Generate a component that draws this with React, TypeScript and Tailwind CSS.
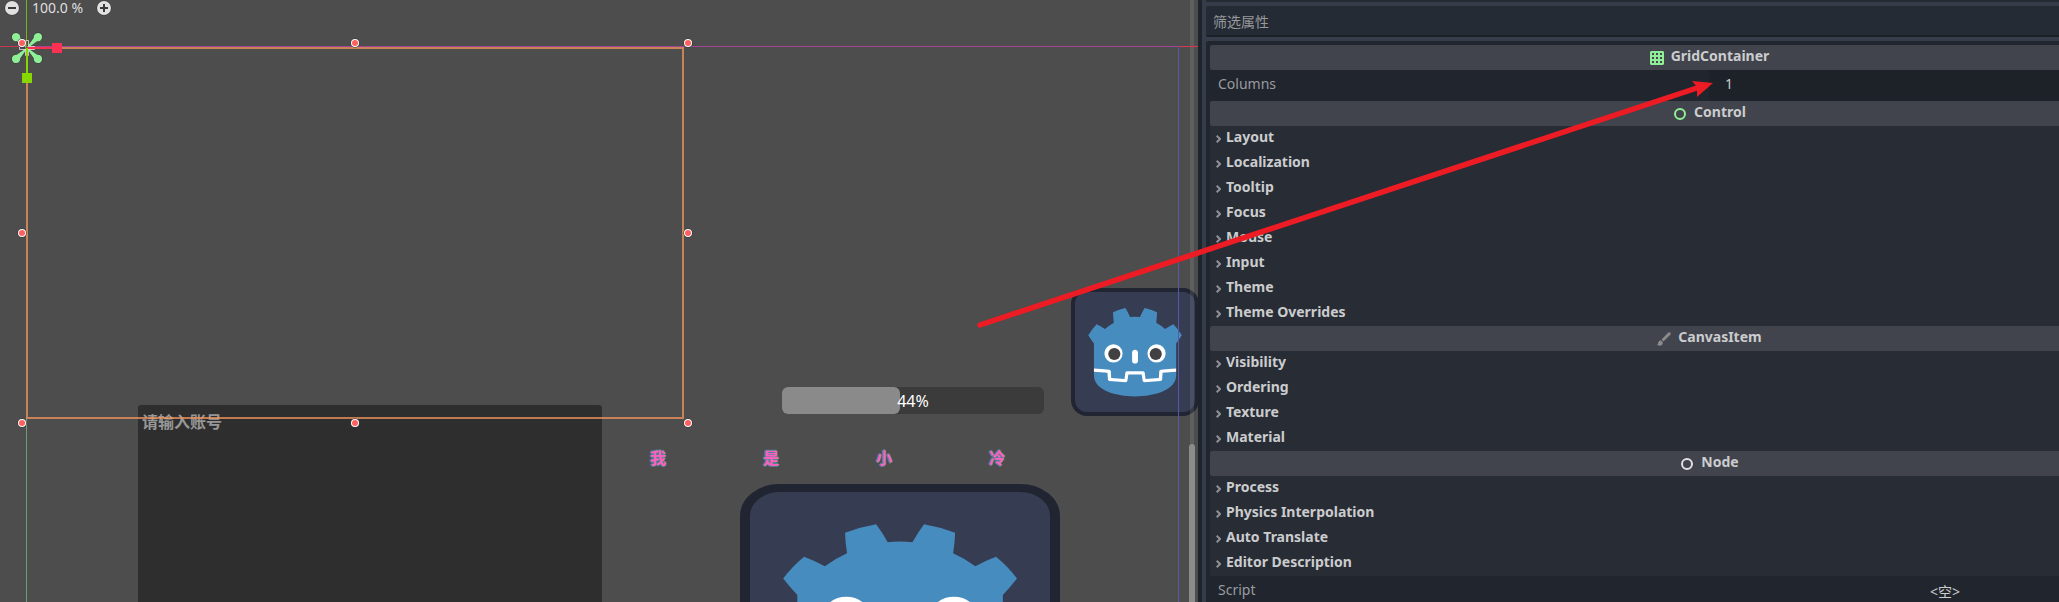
import React from "react";

const GODOT_BLUE = "#478cbf";

function GodotLogo({ className }: { className: string }) {
  return (
    <svg viewBox="0 0 128 128" preserveAspectRatio="none" className={className} aria-hidden="true">
      <rect x="2" y="2" width="124" height="124" rx="14" fill="#363d52" stroke="#212532" strokeWidth="4" />
      <g transform="scale(.101) translate(122 122)">
        <g fill="#fff">
          <path d="M105 673v33q407 354 814 0v-33z" />
          <path
            fill={GODOT_BLUE}
            d="m105 673 152 14q12 1 15 14l4 67 132 10 8-61q2-11 15-15h162q13 4 15 15l8 61 132-10 4-67q3-13 15-14l152-14V427q30-39 56-81-35-59-83-108-43 20-82 47-40-37-88-64 7-51 8-102-59-28-123-42-26 43-46 89-49-7-98 0-20-46-46-89-64 14-123 42 1 51 8 102-48 27-88 64-39-27-82-47-48 49-83 108 26 42 56 81zm0 33v39c0 276 813 276 814 0v-39l-134 12-5 69q-2 10-14 13l-162 11q-12 0-16-11l-10-65H446l-10 65q-4 11-16 11l-162-11q-12-3-14-13l-5-69z"
          />
          <path d="M483 600c0 34 58 34 58 0v-86c0-34-58-34-58 0z" />
          <circle cx="725" cy="526" r="90" />
          <circle cx="299" cy="526" r="90" />
        </g>
        <g fill="#414042">
          <circle cx="307" cy="532" r="60" />
          <circle cx="717" cy="532" r="60" />
        </g>
      </g>
    </svg>
  );
}

function ZoomIcon({ plus }: { plus?: boolean }) {
  return (
    <svg viewBox="0 0 16 16" className="size-4" aria-hidden="true">
      <circle cx="8" cy="8" r="7.5" fill="#333" />
      <circle cx="8" cy="8" r="7" fill="#e0e0e0" />
      <path d={plus ? "M4 8h8M8 4v8" : "M4 8h8"} stroke="#3a3a3a" strokeWidth="2" />
    </svg>
  );
}

const HANDLES = [
  [22, 43],
  [355, 43],
  [688, 43],
  [22, 233],
  [688, 233],
  [22, 423],
  [355, 423],
  [688, 423],
];

function CanvasOverlay() {
  return (
    <svg className="pointer-events-none absolute left-0 top-0 h-[602px] w-[1198px]" aria-hidden="true">
      <path d="M26.500 418V602" stroke="#6f9a78" />
      <path d="M26.500 0V47" stroke="#74b41c" />
      <path d="M0 46.500H26" stroke="#c8364f" />
      <path d="M26 46.500H1178" stroke="#a04494" />
      <path d="M1178 46.500H1198" stroke="#d8364c" />
      <path d="M1178.500 46V602" stroke="#5858a8" />
      <rect x="27" y="48" width="656" height="370" fill="none" stroke="#f2955e" strokeOpacity="0.75" strokeWidth="2" />
      <g fill="#8eef97" stroke="#353535" strokeWidth="1" paintOrder="stroke">
        {[45, 135, 225, 315].map((a) => (
          <path
            key={a}
            transform={`translate(27 48) rotate(${a})`}
            d="M1 -.6L12 -2.400A4.200 4.200 0 1 1 12 2.400L1 .6Z"
          />
        ))}
      </g>
      <path
        d="M25.500 40.500h3v6h6v3h-6v6h-3v-6h-6v-3h6z"
        fill="none"
        stroke="#e6d6d6"
        strokeOpacity="0.85"
      />
      <path d="M27 48H57" stroke="#f7304d" strokeWidth="2" />
      <path d="M27 48V78" stroke="#87d600" strokeWidth="2" />
      <rect x="52" y="43" width="10" height="10" fill="#fa3152" />
      <rect x="22" y="73" width="10" height="10" fill="#87d600" />
      {HANDLES.map(([x, y]) => (
        <g key={`${x}-${y}`}>
          <circle cx={x} cy={y} r="4.600" fill="#333" />
          <circle cx={x} cy={y} r="4" fill="#fff" />
          <circle cx={x} cy={y} r="3" fill="#ff5f5f" />
        </g>
      ))}
    </svg>
  );
}

function Viewport() {
  return (
    <main className="relative w-[1198px] shrink-0 overflow-hidden bg-[#4d4d4d]">
      <textarea
        aria-label="账号"
        placeholder="请输入账号"
        className="absolute left-[138px] top-[405px] h-[240px] w-[464px] resize-none rounded-[3px] bg-[#2e2e2e] px-1 py-[5px] text-base leading-6 font-bold placeholder:text-[#979797] outline-none"
      />
      <div
        role="progressbar"
        aria-label="进度"
        aria-valuenow={44}
        className="absolute left-[782px] top-[387px] grid h-[27px] w-[262px] place-items-center rounded-md bg-[#3b3b3b]"
      >
        <span className="col-start-1 row-start-1 h-full w-[118px] justify-self-start rounded-md bg-[#8a8a8a]" />
        <span className="z-10 col-start-1 row-start-1 text-base leading-6 text-white">44%</span>
      </div>
      <div className="absolute left-[650px] top-[446px] flex gap-[97px] text-base leading-6 font-bold text-[#ff5fc0]">
        {["我", "是", "小", "冷"].map((c) => (
          <span
            key={c}
            className="w-4 [text-shadow:1px_0_0_#50858f,-1px_0_0_#50858f,0_1px_0_#50858f,0_-1px_0_#50858f]"
          >
            {c}
          </span>
        ))}
      </div>
      <GodotLogo className="absolute left-[740px] top-[484px] h-[256px] w-[320px]" />
      <GodotLogo className="absolute left-[1071px] top-[288px] size-32" />
      <div className="absolute inset-y-0 right-1 w-1 bg-white/10" />
      <div className="absolute bottom-0 right-[3px] top-[444px] w-1.5 rounded-t bg-[#8c8c8c]" />
      <CanvasOverlay />
      <div className="absolute left-1 top-0 flex h-4 items-center gap-3 text-sm leading-4 text-[#dfdfdf]">
        <button aria-label="缩小">
          <ZoomIcon />
        </button>
        <span className="w-[52px] whitespace-nowrap">100.0 %</span>
        <button aria-label="放大">
          <ZoomIcon plus />
        </button>
      </div>
    </main>
  );
}

function GridIcon() {
  return (
    <svg viewBox="0 0 14 14" className="mt-1 size-[14px]" aria-hidden="true">
      <path
        fillRule="evenodd"
        fill="#8eef97"
        d="M1 0h12l1 1v12l-1 1H1l-1-1V1zM2 2v2h2V2zM6 2v2h2V2zM10 2v2h2V2zM2 6v2h2V6zM6 6v2h2V6zM10 6v2h2V6zM2 10v2h2v-2zM6 10v2h2v-2zM10 10v2h2v-2z"
      />
    </svg>
  );
}

function RingIcon({ color }: { color: string }) {
  return (
    <svg viewBox="0 0 14 14" className="mt-1 size-[14px]" aria-hidden="true">
      <circle cx="7" cy="7" r="5" fill="none" stroke={color} strokeWidth="2" />
    </svg>
  );
}

function BrushIcon() {
  return (
    <svg viewBox="0 0 14 14" className="mt-1 size-[14px]" aria-hidden="true">
      <g fill="#8a8a8a">
        <path d="M4.500 7.500L11.300 .6Q12.500 -.2 13.400 .7Q14.200 1.600 13.300 2.700L6.500 9.500Z" />
        <path d="M3.800 8.200L5.800 10.200Q5.800 13.800 2.500 13.800Q.8 13.600 0 12.600Q1.200 12.300 1.200 10.500Q1.700 8.500 3.800 8.200Z" />
      </g>
    </svg>
  );
}

function Category({ icon, name }: { icon: React.ReactNode; name: string }) {
  return (
    <h2 className="flex h-[25px] items-center justify-center gap-[7px] rounded-l-[2px] bg-[#41444c] pb-1 pl-[150px] text-sm leading-5 font-bold text-[#cbccce]">
      {icon}
      {name}
    </h2>
  );
}

function Sections({ names }: { names: string[] }) {
  return (
    <div className="bg-[#282c35]">
      {names.map((name) => (
        <button
          key={name}
          className="flex h-[25px] w-full items-center gap-[5px] pb-1 pl-1.5 text-left text-sm leading-5 font-bold text-[#cbccce]"
        >
          <svg viewBox="0 0 5 8" className="mt-1 h-2 w-[5px]" fill="none" aria-hidden="true">
            <path d="M.7 .7L4 4L.7 7.300" stroke="#8f9196" strokeWidth="2" />
          </svg>
          {name}
        </button>
      ))}
    </div>
  );
}

function Inspector() {
  return (
    <aside className="min-w-0 flex-1 border-l-4 border-[#1f232b] bg-[#363d4a] pl-1 text-sm">
      <div className="h-0.5 bg-[#252b34]" />
      <input
        aria-label="筛选属性"
        placeholder="筛选属性"
        className="mt-1 block h-[31px] w-full rounded-l-[2px] border-b-2 border-[#1b1f26] bg-[#252b34] px-[7px] pt-0.5 leading-5 outline-none placeholder:text-[#97999d]"
      />
      <div className="mt-1 rounded-tl-[2px] bg-[#21252e] pl-1 pt-1">
        <Category icon={<GridIcon />} name="GridContainer" />
        <label className="flex h-[31px] items-center text-[#999b9f]">
          <span className="flex-1 pb-1 pl-2">Columns</span>
          <input
            defaultValue="1"
            className="h-full w-[350px] rounded-l-[3px] bg-[#1d2128] pb-1 pl-4 text-[#cbccce] outline-none"
          />
        </label>
        <Category icon={<RingIcon color="#8eef97" />} name="Control" />
        <Sections
          names={["Layout", "Localization", "Tooltip", "Focus", "Mouse", "Input", "Theme", "Theme Overrides"]}
        />
        <Category icon={<BrushIcon />} name="CanvasItem" />
        <Sections names={["Visibility", "Ordering", "Texture", "Material"]} />
        <Category icon={<RingIcon color="#e0e0e0" />} name="Node" />
        <Sections names={["Process", "Physics Interpolation", "Auto Translate", "Editor Description"]} />
        <div className="flex h-[31px] items-center text-[#999b9f]">
          <span className="flex-1 pb-1 pl-2">Script</span>
          <button className="w-[350px] pl-[122px] text-center text-[#cbccce]">&lt;空&gt;</button>
        </div>
      </div>
    </aside>
  );
}

export default function App() {
  return (
    <div className="relative flex h-screen overflow-hidden bg-[#21252e] font-['Noto_Sans','Noto_Sans_CJK_SC',sans-serif]">
      <Viewport />
      <Inspector />
      <svg className="pointer-events-none absolute left-0 top-0 h-[602px] w-[2059px]" aria-hidden="true">
        <path d="M980 325L1700 87" stroke="#ed1c24" strokeWidth="5.500" strokeLinecap="round" />
        <path d="M1713 83L1692 81L1697 87L1697 97Z" fill="#ed1c24" />
      </svg>
    </div>
  );
}
